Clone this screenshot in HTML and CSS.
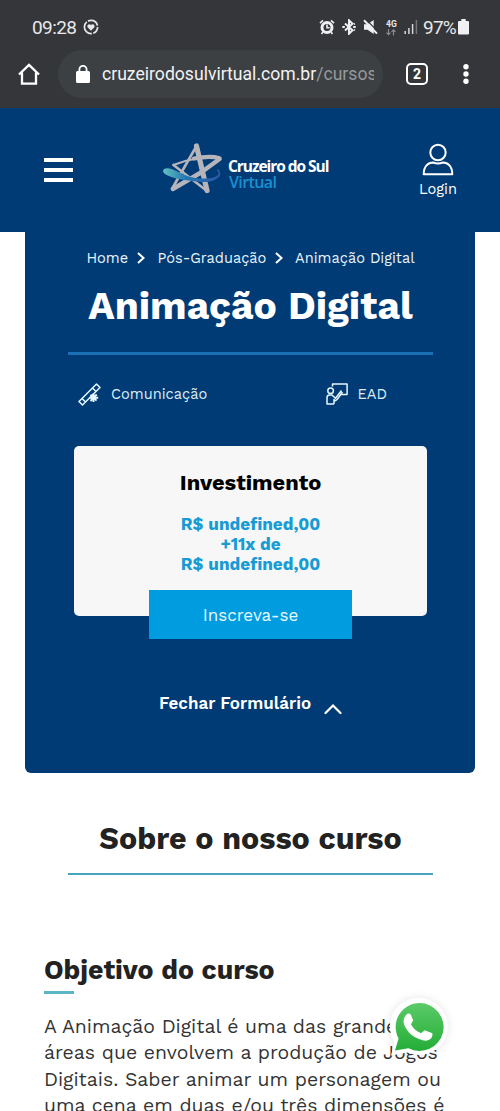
FILE: index.html
```html
<!DOCTYPE html>
<html lang="pt-BR">
<head>
    <meta charset="UTF-8">
    <meta name="viewport" content="width=device-width, initial-scale=1.0">
    <title>Animação Digital</title>
    <link rel="stylesheet" href="styles.css">
</head>
<body>
    <!-- Barra do celular -->
    <div class="phone">
        <div class="status">
            <span class="clock">09:28</span>
            <svg class="heart" width="16" height="16" viewBox="0 0 16 16">
                <circle cx="8" cy="8" r="6.6" fill="none" stroke="#e6e6e8" stroke-width="1.7" stroke-dasharray="8 1.4 17 1.4 12 1.7"/>
                <path d="M8 11.8 4.8 8.5C3.3 6.5 6.2 4 8 6c1.8-2 4.7.5 3.2 2.5z" fill="#e6e6e8"/>
            </svg>
            <div class="status-icons">
                <svg width="16" height="16" viewBox="0 0 16 16">
                    <circle cx="8" cy="8.5" r="5" fill="none" stroke="#f0f0f2" stroke-width="3"/>
                    <path d="M8 5.5v3.3h2.6M1 4.2 4 1.3M15 4.2l-3-2.9M4 13l-1.5 2M12 13l1.5 2" fill="none" stroke="#f0f0f2" stroke-width="1.6"/>
                </svg>
                <svg class="bt" width="14" height="16" viewBox="0 0 14 16">
                    <path d="m3 4.5 7.5 6.8L7 14.7V1.3l3.5 3.4L3 11.500" fill="none" stroke="#f0f0f2" stroke-width="2"/>
                    <path d="M.3 8h2.5M11.2 8h2.5M11.8 5.2l1-.6M11.8 10.8l1 .6" stroke="#f0f0f2" stroke-width="2"/>
                </svg>
                <svg class="mute" width="15" height="16" viewBox="0 0 15 16">
                    <path d="M1 5.2h3.5L10.7 1v14L4.5 10.700H1z" fill="#f0f0f2"/>
                    <path d="M2.6 0 15 12.6" stroke="#35363a" stroke-width="1.2"/>
                    <path d="m1 1.3 13 13.3" stroke="#f0f0f2" stroke-width="2"/>
                </svg>
                <span class="net">4G<svg width="10" height="7" viewBox="0 0 10 7"><path d="M2.5 0v5.5M.5 3.7l2 2 2-2M7.5 6.5V1M5.5 2.8l2-2 2 2" fill="none" stroke="#8a8b8e" stroke-width="1.2"/></svg></span>
                <svg class="signal" width="14" height="14" viewBox="0 0 14 14">
                    <path d="M1.2 11v3M4.9 8v6M8.6 4v10" stroke="#d8d8da" stroke-width="1.5"/>
                    <path d="M12.4 0v14" stroke="#75767a" stroke-width="1.5"/>
                </svg>
                <span class="percent">97%</span>
                <svg class="battery" width="11" height="16" viewBox="0 0 11 16">
                    <path d="M3.3 0h4.4v2H10a1 1 0 0 1 1 1v11.5a1 1 0 0 1-1 1H1a1 1 0 0 1-1-1V3a1 1 0 0 1 1-1h2.3z" fill="#f0f0f2"/>
                </svg>
            </div>
        </div>
        <div class="toolbar">
            <svg class="home" width="24" height="24" viewBox="0 0 24 24">
                <path d="M2 12.5 12 2.8l10 9.7M5 10.5v11.2h14V10.5" fill="none" stroke="#fff" stroke-width="2.3"/>
            </svg>
            <div class="address">
                <svg width="14" height="18" viewBox="0 0 14 18">
                    <rect y="6" width="14" height="12" rx="1.5" fill="#fff"/>
                    <path d="M3.4 7V4.4a3.6 3.6 0 0 1 7.2 0V7" fill="none" stroke="#fff" stroke-width="1.8"/>
                </svg>
                <div class="url">cruzeirodosulvirtual.com.br<span>/cursos</span></div>
            </div>
            <div class="tabs">2</div>
            <svg class="dots" width="6" height="22" viewBox="0 0 6 22">
                <g fill="#fff"><circle cx="3" cy="3.8" r="2.7"/><circle cx="3" cy="11" r="2.7"/><circle cx="3" cy="18.2" r="2.7"/></g>
            </svg>
        </div>
    </div>

    <!-- Cabeçalho -->
    <header class="header">
        <div class="burger"><i></i><i></i><i></i></div>
        <div class="logo">
            <svg width="62" height="54" viewBox="0 0 62 54">
                <defs>
                    <linearGradient id="orbit">
                        <stop offset="0" stop-color="#62c0bd"/>
                        <stop offset=".4" stop-color="#2478b4"/>
                        <stop offset="1" stop-color="#2c57a5"/>
                    </linearGradient>
                </defs>
                <!-- estrela -->
                <g fill="none" stroke="#b5b5bb" stroke-linejoin="round" stroke-linecap="round">
                    <path d="M34.5 4 10.500 46" stroke-width="2.6"/>
                    <path d="M34.5 4 45 48.500" stroke-width="5.2"/>
                    <path d="M57.500 17 39 30.500 10.800 47" stroke-width="4.400"/>
                    <path d="M57.500 16.200C50 14 40 15 32 16.500" stroke-width="4.200"/>
                    <path d="M57.500 16.200C42 14 24 17.500 11.500 23" stroke-width="2.200"/>
                    <path d="M11.500 23 45 49" stroke-width="2.600"/>
                </g>
                <path d="M55.500 27.500C62 34 52 39.500 37.500 38.500" fill="none" stroke="#2c57a5" stroke-width="1.9"/>
                <path d="M3.800 26.600c7-2.400 17.200 9 33.700 9.900 11 .5 17-1 20.200-5.300-1.700 7.700-11 9.500-20.200 8.500C22 38.300 10.500 36.500 3.300 32.200c-3.200-2-2.800-5.200.5-5.600z" fill="url(#orbit)"/>
            </svg>
            <div class="brand">
                <strong>Cruzeiro do Sul</strong>
                <span>Virtual</span>
            </div>
        </div>
        <div class="login">
            <svg width="32" height="33" viewBox="0 0 32 33">
                <circle cx="16" cy="9.5" r="7.7" fill="none" stroke="#fff" stroke-width="2"/>
                <path d="M1.7 31.2c0-8 4.5-11.7 9.3-11.7 3 1.2 7 1.2 10 0 4.8 0 9.3 3.7 9.3 11.7z" fill="none" stroke="#fff" stroke-width="2" stroke-linejoin="round"/>
            </svg>
            <span>Login</span>
        </div>
    </header>

    <!-- Curso -->
    <section class="hero">
        <nav class="crumbs">
            <span class="c1">Home</span>
            <svg width="8" height="12" viewBox="0 0 8 12"><path d="m1 1 5.500 5L1 11" fill="none" stroke="#fff" stroke-width="2"/></svg>
            <span class="c2">Pós-Graduação</span>
            <svg width="8" height="12" viewBox="0 0 8 12"><path d="m1 1 5.500 5L1 11" fill="none" stroke="#fff" stroke-width="2"/></svg>
            <span class="c3">Animação Digital</span>
        </nav>
        <h1>Animação Digital</h1>
        <div class="meta">
            <div class="area">
                <svg width="23" height="23" viewBox="0 0 23 23">
                    <g fill="none" stroke="#e5f7fc" stroke-width="1.5" stroke-linejoin="round">
                        <path d="m1 18.5 3.500 3.500L22 4.500 18.500 1zM14.500 5l3.500 3.500M4 15.500l3.500 3.500"/>
                        <path d="M15.500 10.500v8.500M11.500 14.700h8.700M12.500 11.700l6 6M18.700 11.500l-6.200 6.500" stroke-width="1.9"/>
                    </g>
                </svg>
                <span>Comunicação</span>
            </div>
            <div class="mode">
                <svg width="22" height="22" viewBox="0 0 22 22">
                    <g fill="none" stroke="#e5f7fc" stroke-width="1.5" stroke-linejoin="round">
                        <path d="M6.500 3.500V1h14.600v10.500h-6"/>
                        <circle cx="4.600" cy="7.700" r="2.800"/>
                        <path d="M8 21H1v-6.500c0-2 1-2.500 2.800-2.500H6l3.500 3.200 6-7.700M8 21v-4.500l1.500 1.300 2-1.800 5-7"/>
                    </g>
                </svg>
                <span>EAD</span>
            </div>
        </div>
        <div class="invest">
            <h2>Investimento</h2>
            <p>R$ undefined,00<br><span>+11x de</span><br>R$ undefined,00</p>
            <button>Inscreva-se</button>
        </div>
        <div class="toggle">
            <span>Fechar Formulário</span>
            <svg width="18" height="12" viewBox="0 0 18 12"><path d="m1.500 10 7.500-7.500 7.500 7.500" fill="none" stroke="#fff" stroke-width="2.2" stroke-linecap="round"/></svg>
        </div>
    </section>

    <!-- Sobre -->
    <section class="about">
        <h2>Sobre o nosso curso</h2>
        <h3>Objetivo do curso</h3>
        <p>
            <span>A Animação Digital é uma das grandes</span><br>
            <span>áreas que envolvem a produção de Jogos</span><br>
            <span>Digitais. Saber animar um personagem ou</span><br>
            <span>uma cena em duas e/ou três dimensões é</span>
        </p>
    </section>

    <!-- WhatsApp -->
    <a class="whats" href="#">
        <svg width="60" height="60" viewBox="0 0 60 60">
            <defs>
                <linearGradient id="green" x2="0" y2="1">
                    <stop offset="0" stop-color="#5bcb68"/>
                    <stop offset="1" stop-color="#24ad37"/>
                </linearGradient>
            </defs>
            <path d="M30.500 1a28.500 28.500 0 1 1-12 54.500L2 58.500 5.500 45A28.500 28.500 0 0 1 30.500 1z" fill="#fff"/>
            <path d="M30.500 6a24 24 0 1 1-11 45.300L6 53.500l3.600-12A24 24 0 0 1 30.500 6z" fill="url(#green)"/>
            <path d="M17.500 17.500c1.200-1.400 3.700-1.200 4.500.6l2 4.800c.5 1.400-2.500 3.700-1.800 4.900 2.300 4 5.300 6.600 9.500 8.300 1.300.5 3.200-3.200 4.500-2.700l6.600 2.700c1.300.7.600 3.800-.6 5.200-2.200 2.300-5.300 2.900-8.700 1.900-9.500-2.600-14.800-7.700-17.800-14.200-2-4.300-1.200-8.600 1.800-11.500z" fill="#fff"/>
        </svg>
    </a>
</body>
</html>
```
FILE: styles.css
```css
* { box-sizing: border-box; }
body {
    margin: 0; height: 1111px; overflow: hidden; background: #fff; color: #222;
    font-family: "Work Sans", Inter, sans-serif;
}
h1, h2, h3, p { margin: 0; }
svg { display: block; flex: none; }
span { white-space: nowrap; }
/* Barra do celular */
.phone { height: 108px; background: #35363a; font-family: Roboto, sans-serif; color: #e8e8ea; }
.status { height: 50px; padding: 5px 31px 0 32px; display: flex; align-items: center; font-size: 19px; }
.clock { letter-spacing: -0.6px; width: 45px; }
.heart { margin: -2px 0 0 6px; }
.status-icons { margin-left: auto; display: flex; align-items: center; }
.status-icons > svg { margin-top: -1px; }
.bt { margin-left: 7px; }
.mute { margin-left: 7px; }
.net { margin-left: 8px; width: 11px; font-size: 8.5px; line-height: 9px; font-weight: 700; }
.signal { margin-left: 7px; }
.percent { margin-left: 5px; width: 35px; letter-spacing: -0.8px; }
.toolbar { height: 48px; display: flex; align-items: center; padding: 0 31px 0 17px; }
.address {
    margin-left: 17px; width: 325px; height: 48px; border-radius: 24px; background: #3c4043;
    display: flex; align-items: center; padding-left: 18px;
}
.url { margin-left: 12px; width: 272px; overflow: hidden; white-space: nowrap; font-size: 17.6px; line-height: 24px; color: #f2f2f3; }
.url span { color: #96989b; }
.tabs {
    margin-left: 23px; width: 22px; height: 22px; border: 2px solid #fff; border-radius: 5px;
    font-size: 14px; font-weight: 700; line-height: 18px; text-align: center; color: #fff;
}
.dots { margin-left: auto; }
/* Cabeçalho */
.header { height: 124px; background: #003b75; color: #fff; display: flex; padding: 0 43px 0 44px; }
.burger { width: 29px; padding-top: 50px; }
.burger i { display: block; height: 4px; margin-bottom: 6px; background: #fff; }
.logo { display: flex; margin-left: 89px; padding-top: 34px; }
.brand { margin-left: 4px; padding-top: 16px; font-family: "Open Sans", sans-serif; font-size: 16px; line-height: 16px; }
.brand strong, .brand span { display: block; white-space: nowrap; }
.brand strong { font-weight: 700; font-size: 15.5px; letter-spacing: -1.05px; }
.brand span { padding-left: 1px; color: #1c8fd0; font-weight: 600; letter-spacing: -0.6px; }
.login { margin-left: auto; padding-top: 35px; width: 38px; display: flex; flex-direction: column; align-items: center; }
.login span { font-size: 14.6px; line-height: 18px; margin-top: 4px; }
/* Curso */
.hero { margin: 0 25px; height: 541px; background: #003b75; border-radius: 0 0 6px 6px; color: #fff; padding: 16px 42px 0 43px; }
.crumbs { display: flex; align-items: center; height: 20px; margin-left: 18.5px; font-size: 14.6px; }
.crumbs span { color: #e9f4fa; }
.c1 { width: 50px; }
.c2 { width: 117.5px; margin-left: 13px; }
.c3 { margin-left: 12px; }
.hero h1 {
    height: 87px; padding-top: 14px; border-bottom: 3px solid #1b6fb5; font-size: 38.9px; line-height: 48px;
    font-weight: 700; text-align: center; white-space: nowrap;
}
.meta { display: flex; justify-content: space-between; height: 91px; padding: 28px 46px 0 10px; font-size: 14.6px; line-height: 23px; color: #dcecf5; }
.area, .mode { display: flex; height: 23px; }
.area span, .mode span { margin-left: 10px; }
.invest { margin: 0 6px; height: 170px; border-radius: 5px; background: #f7f7f7; text-align: center; padding-top: 24px; }
.invest h2 { color: #000; font-size: 21.8px; line-height: 26px; font-weight: 700; }
.invest p { margin-top: 18px; color: #169bd5; font-size: 17.1px; line-height: 20px; font-weight: 700; }
.invest button {
    display: block; margin: 16px auto 0; width: 203px; height: 49px; border: 0; background: #009ce0; color: #e8f8ff;
    font: 17px "Work Sans", Inter, sans-serif;
}
.toggle { display: flex; padding: 75px 0 0 91px; font-size: 17px; line-height: 24px; font-weight: 600; }
.toggle svg { margin: 12px 0 0 13px; }
/* Sobre */
.about { padding: 48px 44px 0; }
.about h2 {
    margin: 0 23px 0 24px; height: 54px; border-bottom: 2px solid #45a5bb; text-align: center;
    font-size: 30.4px; line-height: 36px; font-weight: 700; white-space: nowrap;
}
.about h3 { margin-top: 78px; font-size: 26.7px; line-height: 34px; font-weight: 700; white-space: nowrap; }
.about h3::after { content: ""; display: block; width: 30px; height: 3px; margin-top: 4px; background: #5bb5c4; }
.about p { margin-top: 20px; font-size: 19.45px; line-height: 26.3px; color: #333; }
/* WhatsApp */
.whats { position: absolute; left: 389px; top: 997px; filter: drop-shadow(0 0 4px rgba(0,0,0,0.1)); }
```
